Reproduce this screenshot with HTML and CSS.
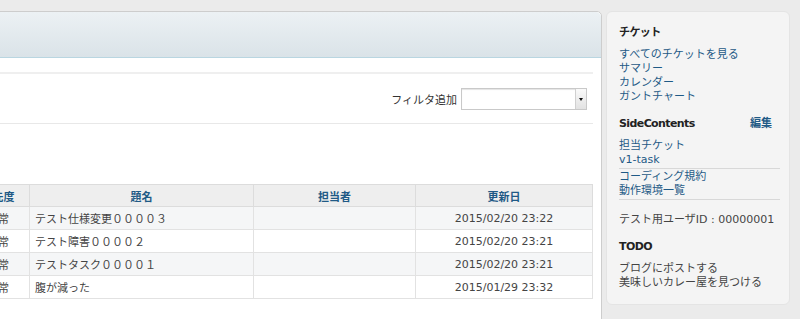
FILE: index.html
```html
<!DOCTYPE html>
<html lang="ja">

<head>
    <meta charset="UTF-8">
    <meta name="viewport" content="width=device-width, initial-scale=1.0">
    <title>チケット</title>
    <link rel="stylesheet" href="styles.css">
</head>

<body>
    <div class="page">
        <div class="main">
            <div class="main-head"></div>
            <div class="main-body">
                <div class="filter-row">
                    <label for="addFilter">フィルタ追加</label>
                    <span class="select" id="addFilter"><span class="select-btn"></span></span>
                </div>

                <table class="list">
                    <thead>
                        <tr>
                            <th class="col-priority">優先度</th>
                            <th class="col-subject">題名</th>
                            <th class="col-assigned">担当者</th>
                            <th class="col-updated">更新日</th>
                        </tr>
                    </thead>
                    <tbody>
                        <tr class="odd">
                            <td class="center">通常</td>
                            <td>テスト仕様変更００００３</td>
                            <td></td>
                            <td class="center">2015/02/20 23:22</td>
                        </tr>
                        <tr>
                            <td class="center">通常</td>
                            <td>テスト障害００００２</td>
                            <td></td>
                            <td class="center">2015/02/20 23:21</td>
                        </tr>
                        <tr class="odd">
                            <td class="center">通常</td>
                            <td>テストタスク００００１</td>
                            <td></td>
                            <td class="center">2015/02/20 23:21</td>
                        </tr>
                        <tr>
                            <td class="center">通常</td>
                            <td>腹が減った</td>
                            <td></td>
                            <td class="center">2015/01/29 23:32</td>
                        </tr>
                    </tbody>
                </table>
            </div>
        </div>

        <div class="sidebar">
            <h3>チケット</h3>
            <a href="#">すべてのチケットを見る</a>
            <a href="#">サマリー</a>
            <a href="#">カレンダー</a>
            <a href="#">ガントチャート</a>

            <div class="side-title">
                <h3>SideContents</h3>
                <a href="#" class="edit">編集</a>
            </div>
            <ul class="side-links">
                <li><a href="#">担当チケット</a><a href="#">v1-task</a></li>
                <li><a href="#">コーディング規約</a><a href="#">動作環境一覧</a></li>
            </ul>
            <p class="user-id">テスト用ユーザID : 00000001</p>

            <h3 class="todo-title">TODO</h3>
            <p class="todo">ブログにポストする<br>美味しいカレー屋を見つける</p>
        </div>
    </div>
</body>

</html>
```

FILE: styles.css
```css
html,
body {
    margin: 0;
    padding: 0;
}

body {
    font-family: "DejaVu Sans", "Noto Sans CJK JP", sans-serif;
    font-size: 11px;
    color: #484848;
    background-color: #ebebeb;
    overflow: hidden;
    height: 319px;
}

a {
    color: #1f5a86;
    text-decoration: none;
}

.page {
    display: flex;
    align-items: flex-start;
    padding-top: 11px;
}

/* main column, page is scrolled a little to the right */
.main {
    margin-left: -50px;
    width: 650px;
    min-height: 320px;
    background-color: #fff;
    border: 1px solid #cdcdcd;
    border-radius: 5px 5px 0 0;
    flex-shrink: 0;
}

.main-head {
    height: 45px;
    background: linear-gradient(#ecf1f4, #dae3e8);
    border-bottom: 1px solid #b9d6e1;
    border-radius: 5px 5px 0 0;
}

.main-body {
    padding: 14px 8px 0 15px;
}

.filter-row {
    display: flex;
    justify-content: flex-end;
    align-items: center;
    gap: 4px;
    height: 49px;
    border-top: 2px solid #efefef;
    border-bottom: 1px solid #e8e8e8;
    padding-right: 6px;
    color: #333;
}

.select {
    display: flex;
    justify-content: flex-end;
    width: 124px;
    height: 20px;
    border: 1px solid #c9c9c9;
    background-color: #fff;
    box-shadow: inset 0 1px 1px #e4e4e4;
}

.select-btn {
    position: relative;
    width: 10px;
    border-left: 1px solid #d0d0d0;
    background: linear-gradient(#fafafa, #e2e2e2);
}

.select-btn::after {
    content: "";
    position: absolute;
    left: 3px;
    top: 9px;
    border-left: 2px solid transparent;
    border-right: 2px solid transparent;
    border-top: 3px solid #111;
}

.list {
    margin-top: 60px;
    width: 627px;
    border-collapse: collapse;
    border: 1px solid #dcdcdc;
}

.list th {
    height: 21px;
    padding: 0;
    background-color: #eeeeee;
    color: #1f5a86;
    font-weight: bold;
    border: 1px solid #dcdcdc;
    font-family: "Noto Sans CJK JP", sans-serif;
}

.list td {
    height: 22px;
    padding: 0 5px;
    border: 1px solid #e2e2e2;
    color: #444;
}

.list tr.odd td {
    background-color: #f5f6f7;
}

.list td.center {
    text-align: center;
}

.col-priority {
    width: 62px;
}

.col-subject {
    width: 223px;
}

.col-assigned {
    width: 161px;
}

/* sidebar */
.sidebar {
    margin-left: 4px;
    width: 170px;
    padding: 13px 0 14px 12px;
    background-color: #f4f4f4;
    border: 1px solid #e4e4e4;
    border-radius: 6px;
    flex-shrink: 0;
}

.sidebar h3 {
    margin: 0 0 7px;
    font-size: 11px;
    line-height: 16px;
    color: #222;
    letter-spacing: -0.6px;
}

.sidebar > a {
    display: block;
    line-height: 14px;
}

.side-title {
    display: flex;
    justify-content: space-between;
    margin-top: 12px;
    padding-right: 17px;
}

.side-title .edit {
    font-weight: bold;
    line-height: 16px;
}

.side-links {
    list-style: none;
    margin: 0;
    padding: 0 9px 0 0;
}

.side-links li {
    border-bottom: 1px solid #d8d8d8;
    padding-bottom: 1px;
}

.side-links a {
    display: block;
    line-height: 14px;
}

.side-links li + li {
    padding-top: 1px;
}

.user-id {
    margin: 13px 0 0;
    line-height: 14px;
    color: #444;
}

.todo-title {
    margin-top: 12px !important;
}

.todo {
    margin: 0;
    line-height: 14px;
    color: #444;
}
```
